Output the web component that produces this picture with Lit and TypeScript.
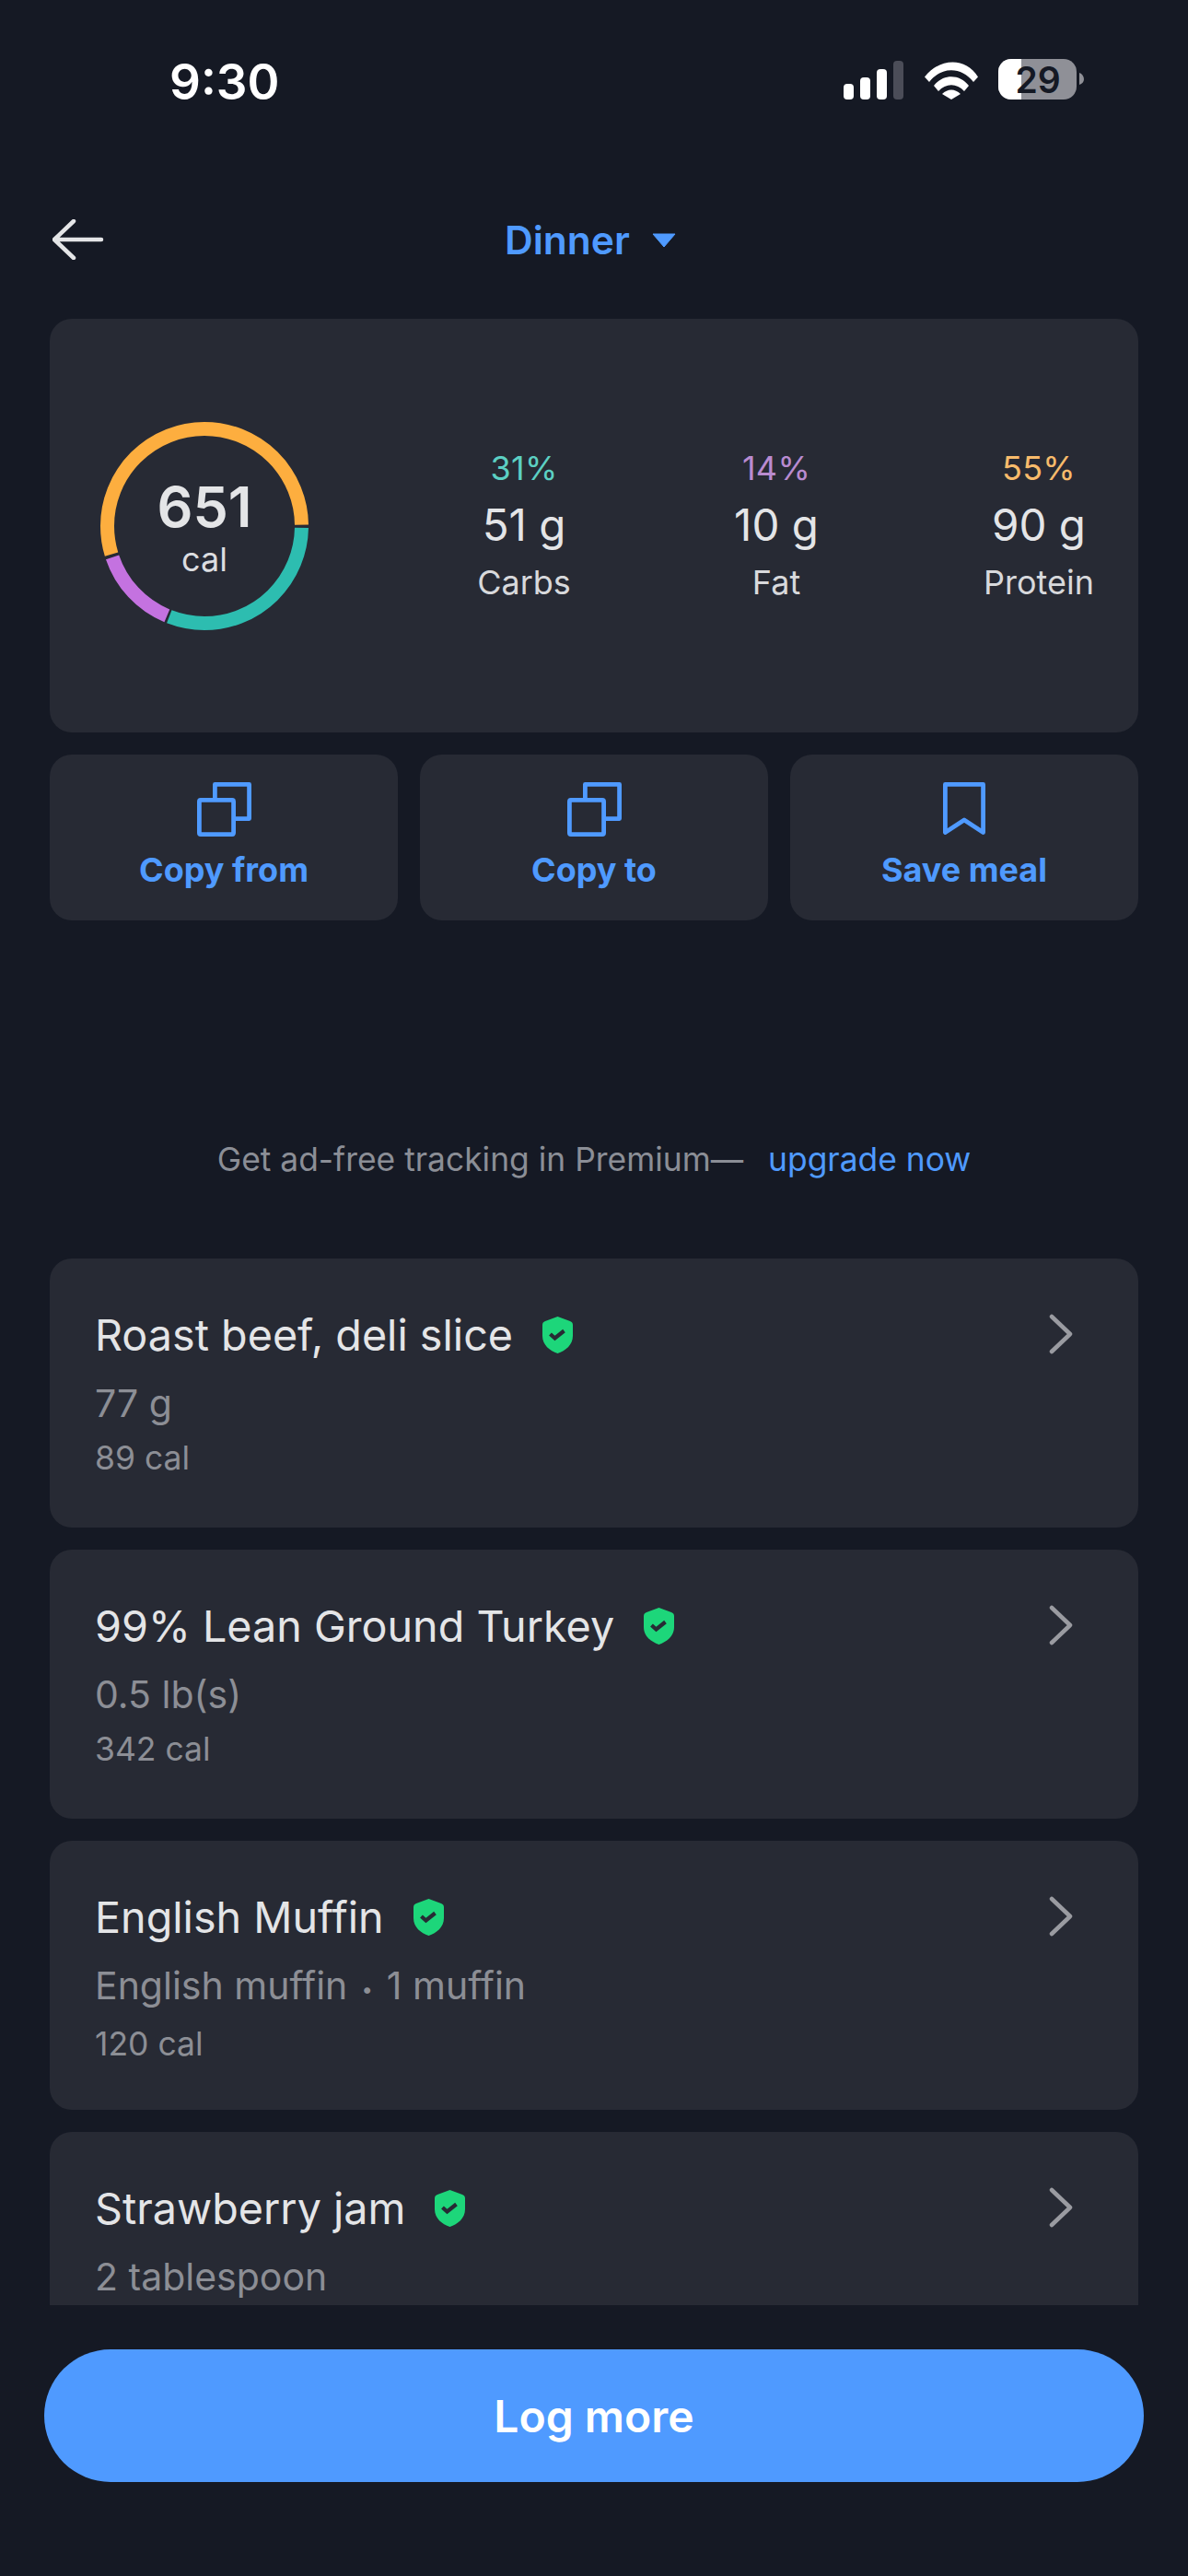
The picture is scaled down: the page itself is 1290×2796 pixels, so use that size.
import { LitElement, html, css, svg } from "lit";
import { customElement } from "lit/decorators.js";

const foods = [
  { name: "Roast beef, deli slice", amount: html`77 g`, cal: "89 cal" },
  { name: "99% Lean Ground Turkey", amount: html`0.5 lb(s)`, cal: "342 cal" },
  { name: "English Muffin", amount: html`English muffin <span class="dot">•</span> 1 muffin`, cal: "120 cal" },
  { name: "Strawberry jam", amount: html`2 tablespoon`, cal: "" },
];
const macros = [
  { pct: "31%", val: "51 g", label: "Carbs", cls: "teal" },
  { pct: "14%", val: "10 g", label: "Fat", cls: "purple" },
  { pct: "55%", val: "90 g", label: "Protein", cls: "orange" },
];
const copyIcon = svg`<svg width="59" height="59" viewBox="0 0 59 59" fill="none" stroke="#4f9aff" stroke-width="4.800" stroke-linejoin="round"><rect x="2.400" y="19.400" width="37.200" height="37.200" rx="1.500"/><path d="M19.400 19V2.400H56.600V39.600H40"/></svg>`;

@customElement("app-root")
export class AppRoot extends LitElement {
  static styles = css`
    :host { display: block; width: 1290px; height: 2796px; background: #151924; font-family: Inter, "Liberation Sans", sans-serif; color: #e4e5e7; overflow: hidden; }
    .page { height: 2796px; display: flex; flex-direction: column; }
    .status { height: 174px; display: flex; padding: 61px 111px 0 184px; box-sizing: border-box; justify-content: space-between; align-items: flex-start; }
    .time { font-size: 53px; font-weight: 600; color: #fff; line-height: 56px; }
    .sys { display: flex; margin-top: 3px; }
    .header { height: 172px; box-sizing: border-box; display: flex; align-items: flex-start; padding: 64px 0 0 57px; position: relative; }
    .title { position: absolute; left: 548px; top: 62px; display: flex; align-items: center; gap: 24px; color: #4f9aff; font-size: 42.500px; font-weight: 600; line-height: 50px; }
    .summary { margin: 0 54px; height: 449px; background: #272a34; border-radius: 24px; display: flex; align-items: center; position: relative; }
    .ring { margin-left: 55px; width: 226px; height: 226px; position: relative; flex: none; }
    .ring svg { display: block; }
    .ring-label { position: absolute; inset: 0; display: flex; flex-direction: column; align-items: center; }
    .ring-num { font-size: 61px; font-weight: 600; line-height: 64px; margin-top: 60px; }
    .ring-cal { font-size: 36px; line-height: 40px; margin-top: 5px; color: #dcdde0; }
    .macro { position: absolute; top: 142px; width: 240px; margin-left: -120px; text-align: center; }
    .macro:nth-of-type(2) { left: 515px; }
    .macro:nth-of-type(3) { left: 789px; }
    .macro:nth-of-type(4) { left: 1074px; }
    .pct { font-size: 36px; line-height: 40px; letter-spacing: 0.300px; }
    .teal { color: #5cd0c3; } .purple { color: #b98bd0; } .orange { color: #f7bb6b; }
    .val { font-size: 47.500px; line-height: 56px; margin-top: 14px; }
    .lab { font-size: 36px; line-height: 40px; margin-top: 14px; color: #d8d9dc; }
    .actions { margin: 24px 54px 0; display: grid; grid-template-columns: repeat(3, 1fr); gap: 24px; }
    .action { height: 180px; background: #272a34; border-radius: 24px; display: flex; flex-direction: column; align-items: center; padding-top: 30px; box-sizing: border-box; color: #4f9aff; font-size: 36px; font-weight: 700; }
    .action svg { display: block; }
    .action span { line-height: 44px; margin-top: 14px; }
    .promo { height: 367px; box-sizing: border-box; padding-top: 238px; display: flex; justify-content: center; gap: 27px; font-size: 35.400px; line-height: 44px; color: #8b8e96; }
    .promo a { color: #4f9aff; }
    .list { flex: none; height: 1136px; overflow: hidden; display: flex; flex-direction: column; gap: 24px; padding: 0 54px; }
    .food { flex: none; height: 292px; background: #272a34; border-radius: 24px; box-sizing: border-box; padding: 53px 49px 0; position: relative; }
    .name { display: flex; align-items: center; gap: 32px; font-size: 46.700px; line-height: 60px; color: #e4e5e7; }
    .amt { font-size: 41px; line-height: 50px; margin-top: 19px; color: #8c8e95; }
    .dot { font-size: 22px; vertical-align: 3px; margin: 0 3.500px; }
    .cal { font-size: 35.500px; line-height: 42px; margin-top: 14px; color: #8c8e95; }
    .chev { position: absolute; right: 71px; top: 60px; }
    .foot { flex: none; padding: 48px 48px 0; }
    .log { height: 144px; border-radius: 72px; background: #4f9aff; display: flex; align-items: center; justify-content: center; color: #fff; font-size: 48px; font-weight: 600; }
  `;

  render() {
    return html`<div class="page">
      <div class="status">
        <div class="time">9:30</div>
        <div class="sys">
          <svg width="263" height="50" viewBox="0 0 263 50">
            <rect x="0" y="27" width="11" height="17" rx="4" fill="#fff"/>
            <rect x="18" y="20" width="11" height="24" rx="4" fill="#fff"/>
            <rect x="36" y="11" width="11" height="33" rx="4" fill="#fff"/>
            <rect x="54" y="2" width="11" height="42" rx="4" fill="#4b4d58"/>
            <path d="M88 19.500C105 -2 133 -2 146 19.500L141 25C128 8 106 8 93 25Z" fill="#fff"/>
            <path d="M98 29C108 16 126 16 136 29L131 35C123 26 111 26 103 35Z" fill="#fff"/>
            <path d="M107 38C113 32 121 32 127 38L117 44Z" fill="#fff"/>
            <rect x="168" y="0" width="85" height="44" rx="14" fill="#8f9097"/>
            <path d="M182 0H193V44H182A14 14 0 0 1 168 30V14A14 14 0 0 1 182 0Z" fill="#fff"/>
            <path d="M256 15C259 16 261 19 261 22S259 27 256 28Z" fill="#8f9097"/>
            <text x="211" y="37" text-anchor="middle" font-size="39" font-weight="600" fill="#151924" font-family="Inter, sans-serif">29</text>
          </svg>
        </div>
      </div>
      <div class="header">
        <svg width="56" height="44" viewBox="0 0 56 44" fill="none" stroke="#e4e5e7" stroke-width="4.500" stroke-linecap="round" stroke-linejoin="round"><path d="M23 2L2 22L23 42M2 22H53"/></svg>
        <div class="title">Dinner
          <svg width="26" height="16" viewBox="0 0 26 16"><path d="M1 1H25L13 15Z" fill="#4f9aff" stroke="#4f9aff" stroke-linejoin="round"/></svg>
        </div>
      </div>
      <div class="summary">
        <div class="ring">
          <svg width="226" height="226" viewBox="0 0 226 226" fill="none" stroke-width="15">
            <circle cx="113" cy="113" r="105.500" pathLength="100" stroke="#2dbdb0" stroke-dasharray="30.600 69.400" stroke-dashoffset="-0.300"/>
            <circle cx="113" cy="113" r="105.500" pathLength="100" stroke="#c472e0" stroke-dasharray="13.500 86.500" stroke-dashoffset="-31.300"/>
            <circle cx="113" cy="113" r="105.500" pathLength="100" stroke="#fdae3f" stroke-dasharray="54.500 45.500" stroke-dashoffset="-45.300"/>
          </svg>
          <div class="ring-label"><div class="ring-num">651</div><div class="ring-cal">cal</div></div>
        </div>
        ${macros.map(
          (m) => html`<div class="macro">
            <div class="pct ${m.cls}">${m.pct}</div>
            <div class="val">${m.val}</div>
            <div class="lab">${m.label}</div>
          </div>`
        )}
      </div>
      <div class="actions">
        <div class="action">${copyIcon}<span>Copy from</span></div>
        <div class="action">${copyIcon}<span>Copy to</span></div>
        <div class="action">
          <svg width="46" height="59" viewBox="0 0 46 59" fill="none" stroke="#4f9aff" stroke-width="4.800" stroke-linejoin="round"><path d="M2.400 2.400H43.600V54.500L23 41L2.400 54.500Z"/></svg>
          <span>Save meal</span>
        </div>
      </div>
      <div class="promo"><span>Get ad-free tracking in Premium—</span><a>upgrade now</a></div>
      <div class="list">
        ${foods.map(
          (f) => html`<div class="food">
            <div class="name">${f.name}
              <svg width="33" height="40" viewBox="0 0 33 40"><path d="M16.500 0L30 5Q33 6 33 9V21C33 31 25 37 16.500 40C8 37 0 31 0 21V9Q0 6 3 5Z" fill="#1dd67a"/><path d="M8.500 19L13.500 23.500L23.500 15.500" fill="none" stroke="#272a34" stroke-width="4.200"/></svg>
            </div>
            <div class="amt">${f.amount}</div>
            ${f.cal ? html`<div class="cal">${f.cal}</div>` : ""}
            <svg class="chev" width="26" height="44" viewBox="0 0 26 44" fill="none" stroke="#9a9ba1" stroke-width="4.500" stroke-linecap="round" stroke-linejoin="round"><path d="M3 3L23 22L3 41"/></svg>
          </div>`
        )}
      </div>
      <div class="foot"><div class="log">Log more</div></div>
    </div>`;
  }
}
